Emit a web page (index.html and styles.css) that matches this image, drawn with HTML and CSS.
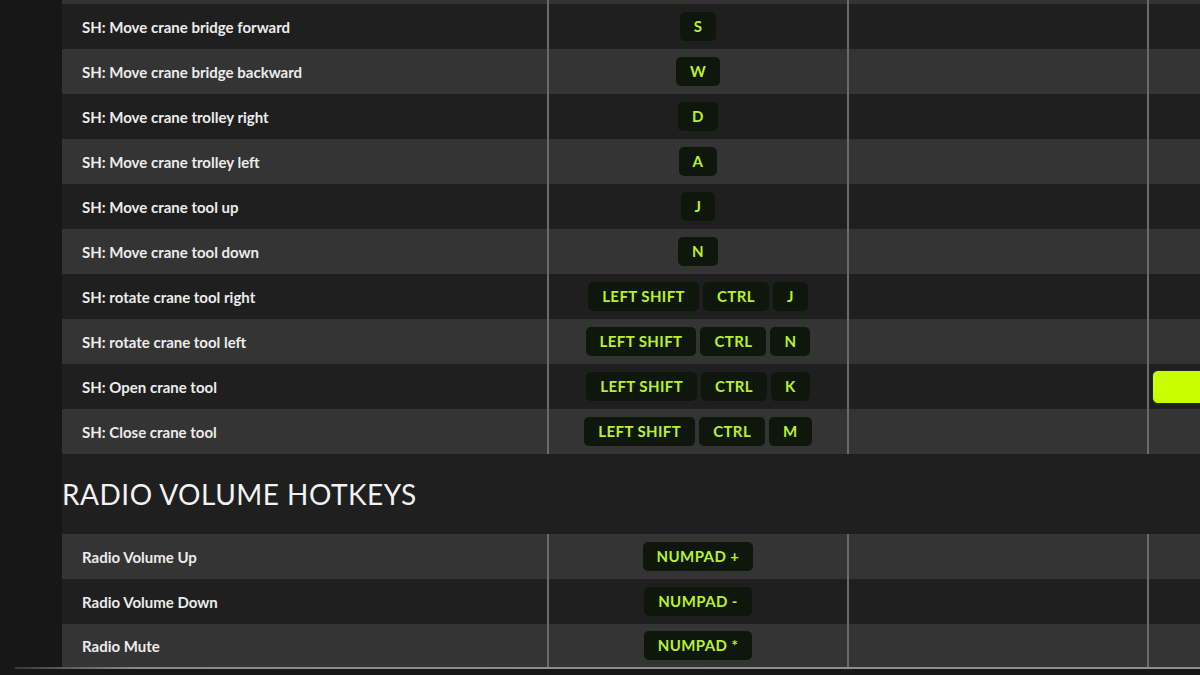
FILE: index.html
```html
<!DOCTYPE html>
<html lang="en">

<head>
    <meta charset="UTF-8">
    <meta name="viewport" content="width=device-width, initial-scale=1.0">
    <title>Hotkeys</title>
    <link rel="stylesheet" href="styles.css">
</head>

<body>
    <div class="page">
        <!-- crane hotkeys (list is scrolled, first row cut off) -->
        <div class="table table-scrolled">
            <div class="row">
                <div class="cell label"></div>
                <div class="cell keys"></div>
                <div class="cell"></div>
                <div class="cell last"></div>
            </div>
            <div class="row">
                <div class="cell label">SH: Move crane bridge forward</div>
                <div class="cell keys"><span class="key">S</span></div>
                <div class="cell"></div>
                <div class="cell last"></div>
            </div>
            <div class="row">
                <div class="cell label">SH: Move crane bridge backward</div>
                <div class="cell keys"><span class="key">W</span></div>
                <div class="cell"></div>
                <div class="cell last"></div>
            </div>
            <div class="row">
                <div class="cell label">SH: Move crane trolley right</div>
                <div class="cell keys"><span class="key">D</span></div>
                <div class="cell"></div>
                <div class="cell last"></div>
            </div>
            <div class="row">
                <div class="cell label">SH: Move crane trolley left</div>
                <div class="cell keys"><span class="key">A</span></div>
                <div class="cell"></div>
                <div class="cell last"></div>
            </div>
            <div class="row">
                <div class="cell label">SH: Move crane tool up</div>
                <div class="cell keys"><span class="key">J</span></div>
                <div class="cell"></div>
                <div class="cell last"></div>
            </div>
            <div class="row">
                <div class="cell label">SH: Move crane tool down</div>
                <div class="cell keys"><span class="key">N</span></div>
                <div class="cell"></div>
                <div class="cell last"></div>
            </div>
            <div class="row">
                <div class="cell label">SH: rotate crane tool right</div>
                <div class="cell keys"><span class="key">LEFT SHIFT</span><span class="key">CTRL</span><span class="key">J</span></div>
                <div class="cell"></div>
                <div class="cell last"></div>
            </div>
            <div class="row">
                <div class="cell label">SH: rotate crane tool left</div>
                <div class="cell keys"><span class="key">LEFT SHIFT</span><span class="key">CTRL</span><span class="key">N</span></div>
                <div class="cell"></div>
                <div class="cell last"></div>
            </div>
            <div class="row">
                <div class="cell label">SH: Open crane tool</div>
                <div class="cell keys"><span class="key">LEFT SHIFT</span><span class="key">CTRL</span><span class="key">K</span></div>
                <div class="cell"></div>
                <div class="cell last"><button class="edit-btn"></button></div>
            </div>
            <div class="row">
                <div class="cell label">SH: Close crane tool</div>
                <div class="cell keys"><span class="key">LEFT SHIFT</span><span class="key">CTRL</span><span class="key">M</span></div>
                <div class="cell"></div>
                <div class="cell last"></div>
            </div>
        </div>

        <h2 class="section-title">RADIO VOLUME HOTKEYS</h2>

        <div class="table">
            <div class="row">
                <div class="cell label">Radio Volume Up</div>
                <div class="cell keys"><span class="key">NUMPAD +</span></div>
                <div class="cell"></div>
                <div class="cell last"></div>
            </div>
            <div class="row">
                <div class="cell label">Radio Volume Down</div>
                <div class="cell keys"><span class="key">NUMPAD -</span></div>
                <div class="cell"></div>
                <div class="cell last"></div>
            </div>
            <div class="row">
                <div class="cell label">Radio Mute</div>
                <div class="cell keys"><span class="key">NUMPAD *</span></div>
                <div class="cell"></div>
                <div class="cell last"></div>
            </div>
        </div>
    </div>

    <div class="rule"></div>
</body>

</html>
```

FILE: styles.css
```css
:root {
    --bg-color: #171717;
    --row-dark: #1f1f1f;
    --row-light: #343434;
    --divider: #6a6a6a;
    --key-bg: #0f170d;
    --key-text: #b8f02a;
    --accent: #c8ff00;
}

body {
    font-family: Lato, 'Open Sans', sans-serif;
    background-color: var(--bg-color);
    color: #ececec;
    margin: 0;
    overflow: hidden;
    height: 675px;
}

.page {
    padding-left: 62px;
}

.table-scrolled {
    margin-top: -41px;
}

.row {
    display: grid;
    grid-template-columns: 487px 300px 300px 1fr;
    height: 45px;
    background-color: var(--row-dark);
}

.row:nth-child(odd) {
    background-color: var(--row-light);
}

.cell {
    box-sizing: border-box;
    border-right: 2px solid var(--divider);
    display: flex;
    align-items: center;
}

.cell.last {
    border-right: none;
    padding-left: 3px;
}

.label {
    padding-left: 20px;
    font-size: 15px;
    font-weight: 700;
}

.keys {
    justify-content: center;
    gap: 4px;
}

.key {
    background-color: var(--key-bg);
    color: var(--key-text);
    font-size: 15px;
    font-weight: 700;
    line-height: 29px;
    padding: 0 14px;
    border-radius: 5px;
    letter-spacing: 0.4px;
}

.edit-btn {
    width: 60px;
    height: 34px;
    background-color: var(--accent);
    border: 1px solid #262a10;
    border-radius: 6px;
    padding: 0;
}

.section-title {
    margin: 0;
    height: 80px;
    line-height: 80px;
    font-size: 28px;
    font-weight: 400;
    color: #f2f2f2;
    background-color: var(--row-dark);
    letter-spacing: 0.5px;
}

.table:last-child .row:last-child {
    height: 43px;
}

.rule {
    margin-left: 15px;
    height: 2px;
    background: linear-gradient(to right, #3a3a3a, #8a8a8a 120px, #8f8f8f);
}
```
